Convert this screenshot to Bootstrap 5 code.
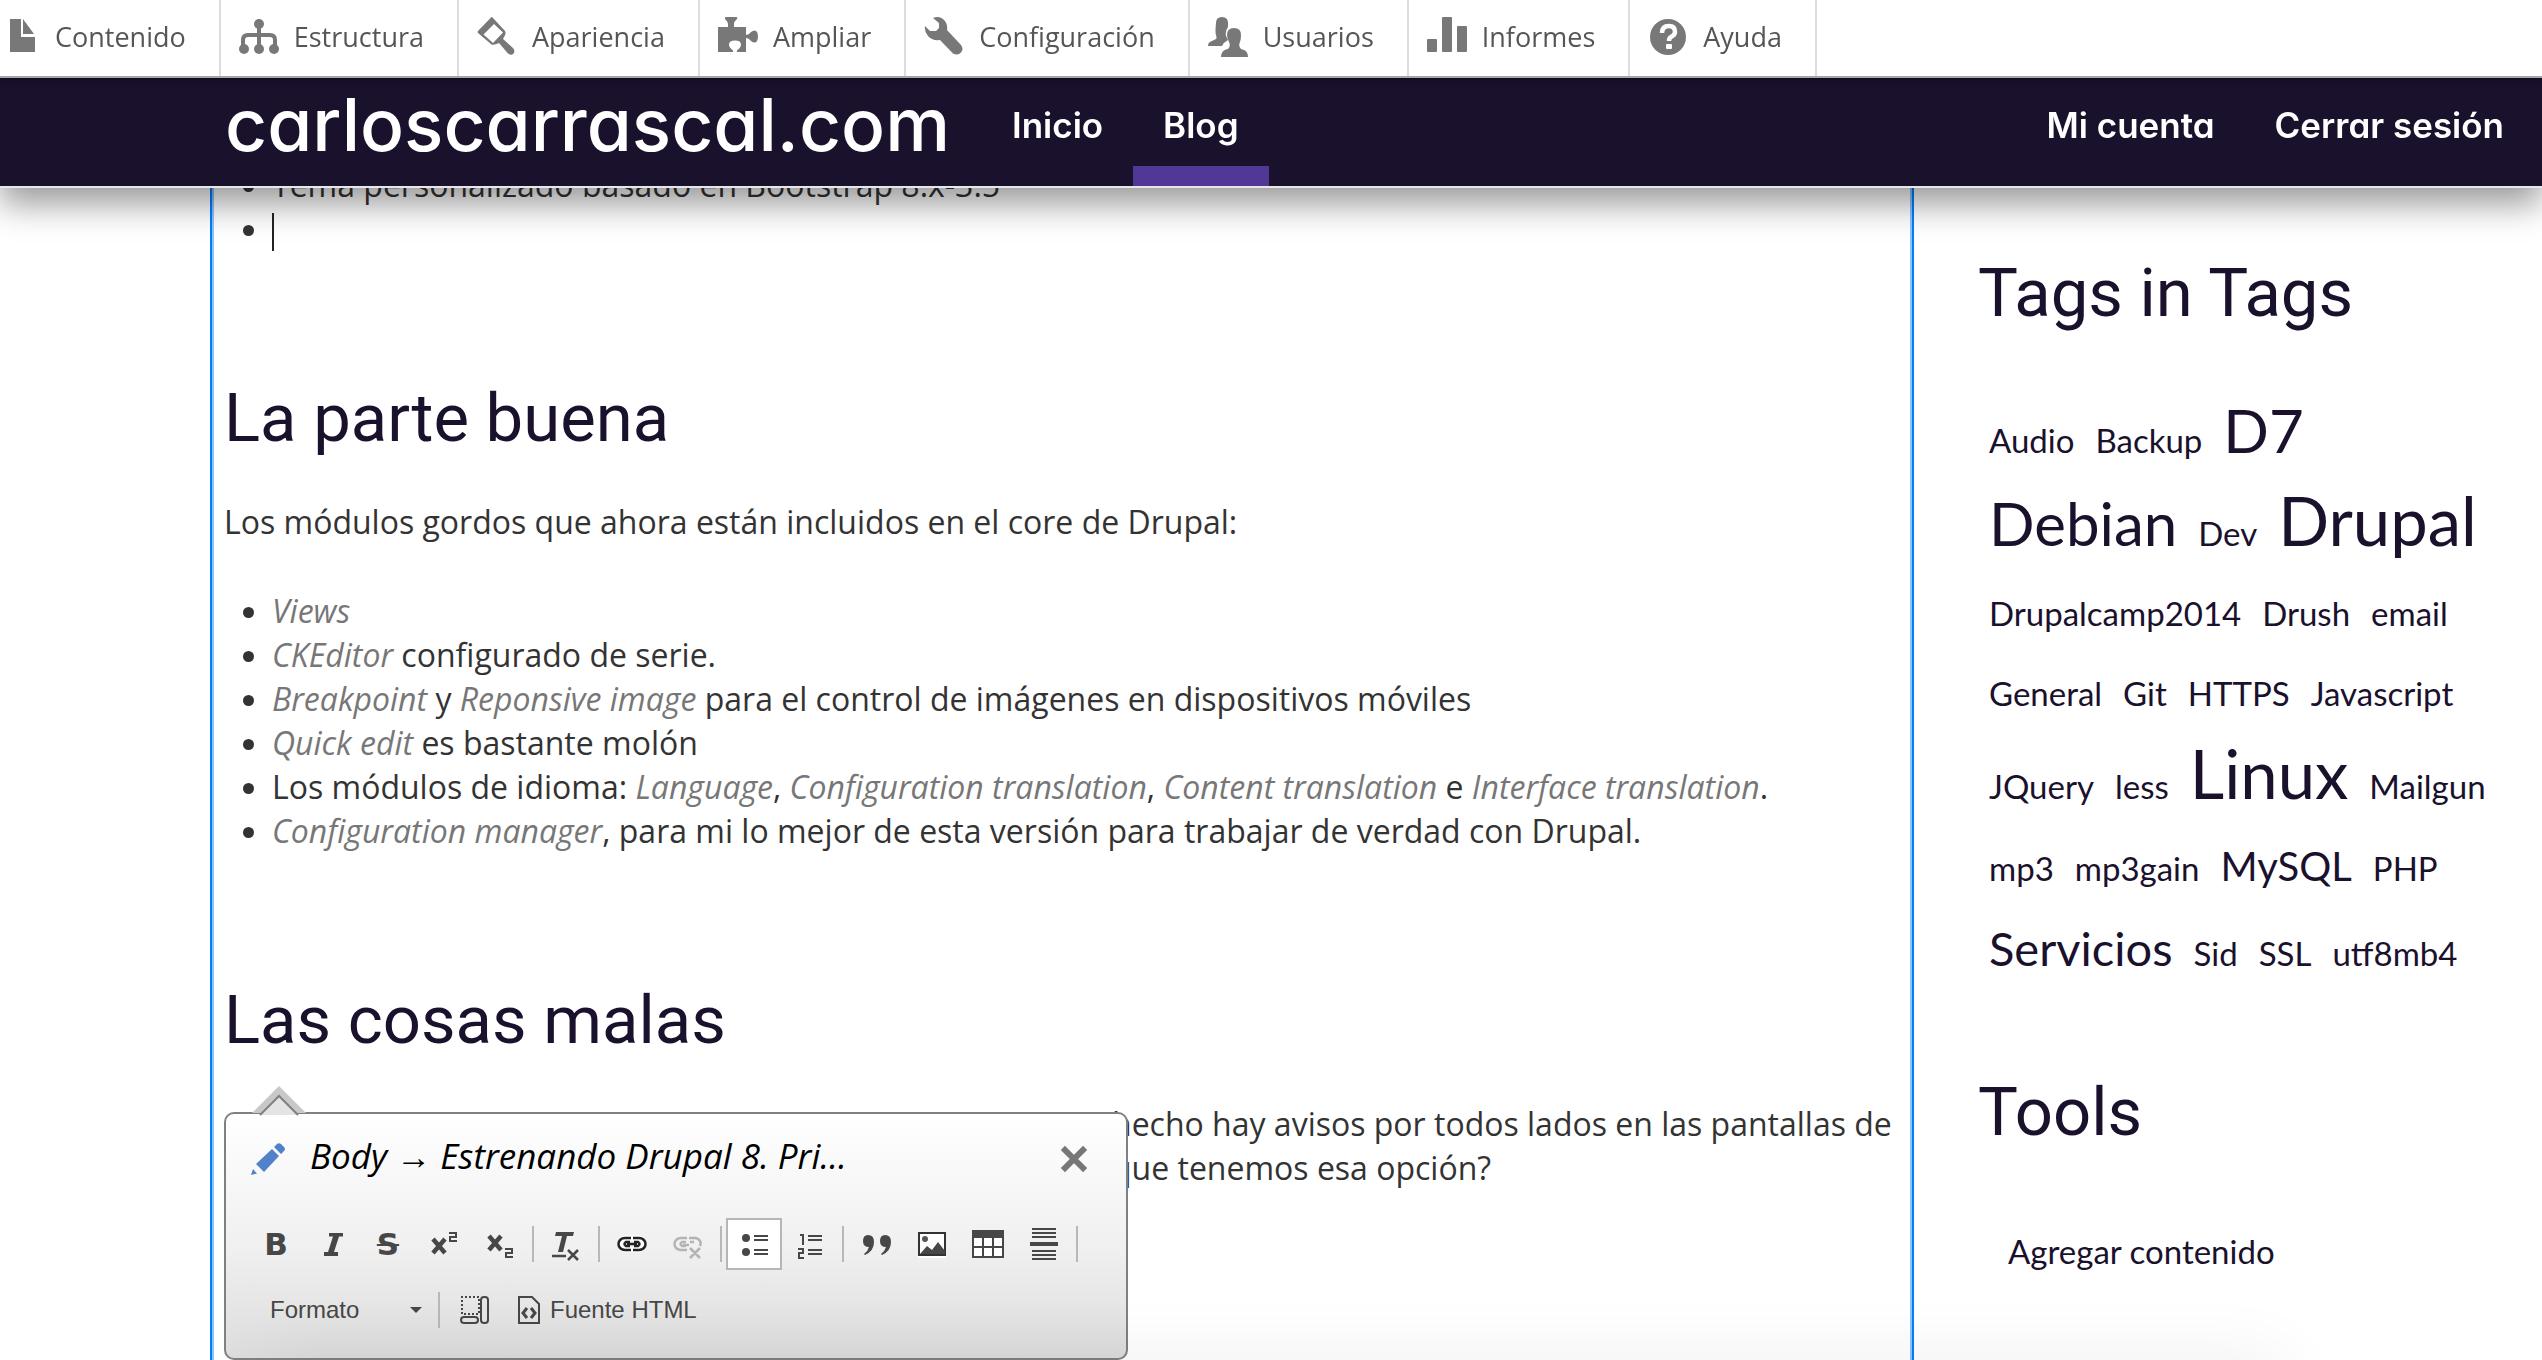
<!DOCTYPE html>
<html lang="es">
<head>
<meta charset="utf-8">
<meta name="viewport" content="width=device-width, initial-scale=1">
<title>Estrenando Drupal 8 | carloscarrascal.com</title>
<link href="https://cdn.jsdelivr.net/npm/bootstrap@5.3.0/dist/css/bootstrap.min.css" rel="stylesheet">
<style>
:root{--ink:#1a112d;--text:#333;--blue:#007fff}
body{font-family:Lato,"Open Sans",sans-serif;font-size:33px;line-height:44px;color:var(--text);background:#fff;height:100vh;overflow:hidden}
a{color:var(--ink);text-decoration:none}
/* admin toolbar */
.admin-bar{background:#fff;border-bottom:2px solid #a6a6a6;height:78px;box-shadow:0 0 8px rgba(0,0,0,.5);position:relative;z-index:2}
.admin-bar a{font-family:"Open Sans",sans-serif;font-size:27px;font-weight:500;color:#565656;gap:15px;padding:0 33px 2px 18px;border-right:2px solid #ddd}
.admin-bar li:first-child a{padding-left:0}
.admin-bar svg{width:40px;height:40px;fill:#787878;flex:none}
/* site header */
.site-nav{background:var(--ink);border-bottom:2px solid #e7e7e7;height:110px;padding-left:210px;padding-right:22px;box-shadow:0 16px 32px rgba(0,0,0,.4)}
.site-nav a{color:#fff;font-family:Inter,sans-serif;font-feature-settings:"cv11";font-weight:600;font-size:35px;border-bottom:20px solid transparent;padding:6px 30px 0}
.site-nav .site-name{font-size:73px;font-weight:500;padding:6px 32px 0 15px}
.site-nav a.active{border-bottom-color:#523896}
/* page */
.page{padding-top:163px;padding-left:210px}
.editable{border:solid var(--blue);border-width:0 2px;box-shadow:inset 2px 0 #8cc3ff,inset -2px 0 #8cc3ff;padding:0 12px}
.editable ul{padding-left:48px;margin-bottom:0}
.editable em{color:#777}
.editable p,.editable ul{font-family:"Open Sans",sans-serif;font-size:32px}
.caret{display:inline-block;width:2px;height:38px;background:#222;vertical-align:middle}
h2{font-family:Roboto,sans-serif;font-weight:400;font-size:67px;line-height:80px;color:var(--ink);margin:127px 0 42px}
p{margin-bottom:45px}
.tail{padding-left:888px}
.side{width:628px;flex:none;padding:11px 0 0 64px}
.side h2{margin:79px 0 57px}
.tagrow{line-height:80px;gap:21px;padding-left:11px}
.t4{font-size:40px}.t6{font-size:47px}.t8{font-size:60px}.t9{font-size:67px}
.tools{padding:20px 0 0 30px}
/* editor dialog */
.dlg{position:absolute;left:224px;top:1112px;width:904px;height:248px;border:2px solid #808080;border-radius:10px;background:linear-gradient(#fff,#f0f0f0 55%,#dcdcdc);z-index:1}
.tip{position:absolute;left:26px;top:-28px}
.dlg-head{padding:20px 38px 0 22px}
.dlg-row1{padding:40px 0 0 22px}
.dlg-row2{padding:22px 0 0 44px}
.dlg-title{font:italic 500 35px/44px "Open Sans",sans-serif;color:#000;padding-left:22px}
.dlg button{border:0;background:none;padding:0;line-height:1}
.tool{width:56px;height:52px}
.dlg svg{overflow:visible}
.tool svg{display:block;margin:auto}
.dlg .tool.on{background:#fff;border:2px solid #b6b6b6}
.sep{width:2px;height:36px;background:#b8b8b8;margin:0 4px}
.cke{color:#474747;font-family:"Liberation Sans",sans-serif;font-size:24px;line-height:32px}
.cke select{appearance:none;border:0;background:none;color:inherit;font:inherit;width:140px;height:36px;padding:0}
.glyph{color:#474747;font:700 31px/32px "DejaVu Sans",sans-serif}
.glyph s{text-decoration-thickness:2px}
.dock{position:absolute;left:280px;right:270px;bottom:0;height:0;box-shadow:0 20px 70px 10px rgba(0,0,0,.16);z-index:3;pointer-events:none}
</style>
</head>
<body>
<header class="fixed-top">
<nav class="admin-bar" aria-label="Administración">
<ul class="list-unstyled d-flex h-100 m-0">
<li><a href="#" class="d-flex align-items-center h-100"><svg viewBox="0 0 40 40"><path d="M10 2h11v18h14v15H10z"/><path d="M23 2l11 15H23z"/></svg>Contenido</a></li>
<li><a href="#" class="d-flex align-items-center h-100"><svg viewBox="0 0 40 40"><path d="M4 30v-7q0-5 5-5h22q5 0 5 5v7M20 7v24" fill="none" stroke="#787878" stroke-width="4"/><circle cx="20" cy="7" r="5"/><circle cx="5" cy="32" r="5"/><circle cx="20" cy="32" r="5"/><circle cx="35" cy="32" r="5"/></svg>Estructura</a></li>
<li><a href="#" class="d-flex align-items-center h-100"><svg viewBox="0 0 40 40"><path fill-rule="evenodd" d="M14.500 0q1 0 2 1.500L28 14q1.500 2-1 6l-1 2 10 9q2.500 3 .5 5.500t-5.500 0L22 26q-5 2.500-7.500 1.500L1 16q-1-1 0-2zM17 7L6.500 17.500 16 26l10-10.500z"/></svg>Apariencia</a></li>
<li><a href="#" class="d-flex align-items-center h-100"><svg viewBox="0 0 40 40"><path d="M7 1q0-1 1-1h10q2 0 1 2-3 2.500-3 5v3h12v8q3 0 5-3 4-3 6 0 2 4 0 9-2 3-6 0-2-3-5-3v14h-8q-1.500 0-1-1.500 4-3 4-6 0-4-6-4t-6 4q0 3 4 6 .5 1.500-1 1.500H0V10h10V7q0-2-3-5z"/></svg>Ampliar</a></li>
<li><a href="#" class="d-flex align-items-center h-100"><svg viewBox="0 0 40 40"><path d="M9 1q7-3 12 3 3 4 2 9l14 15q3 4 0 7.500t-8 1L16 23Q8 24 4 19 0 14 1 9l5 5h6l3-3V6z"/></svg>Configuración</a></li>
<li><a href="#" class="d-flex align-items-center h-100"><svg viewBox="0 0 40 40"><path d="M14 0q6 0 6 6v4q-3 4-2 9l2 4q-4 2-6 6H0q0-4 4-5l4-2q1-1 0-4-1-2 0-12 0-6 6-6z"/><path d="M26 11q7 0 7 7 0 4-1 7-2 4 1 7 7 1 7 8H13q0-7 7-8 3-3 1-7-2-4-2-7 0-7 7-7z"/></svg>Usuarios</a></li>
<li><a href="#" class="d-flex align-items-center h-100"><svg viewBox="0 0 40 40"><rect y="22" width="10" height="13" rx="1"/><rect x="15" width="10" height="35" rx="1"/><rect x="30" y="9" width="10" height="26" rx="1"/></svg>Informes</a></li>
<li><a href="#" class="d-flex align-items-center h-100"><svg viewBox="0 0 40 40"><circle cx="20" cy="20" r="18"/><path d="M14 16q0-7 7-7 6 0 6 6 0 3-4 5-2 1-2 4" fill="none" stroke="#fff" stroke-width="4.500"/><rect x="18" y="27" width="6" height="5" rx="1" fill="#fff"/></svg>Ayuda</a></li>
</ul>
</nav>
<nav class="site-nav d-flex" aria-label="Principal">
<a href="#" class="site-name d-flex align-items-center">carloscarrascal.com</a>
<a href="#" class="d-flex align-items-center">Inicio</a>
<a href="#" class="d-flex align-items-center active">Blog</a>
<a href="#" class="d-flex align-items-center ms-auto">Mi cuenta</a>
<a href="#" class="d-flex align-items-center pe-3">Cerrar sesión</a>
</nav>
</header>

<main class="page d-flex vh-100">
<article class="editable flex-grow-1">
<ul><li>Tema personalizado basado en Bootstrap 8.x-3.5</li><li><span class="caret"></span></li></ul>
<h2>La parte buena</h2>
<p>Los módulos gordos que ahora están incluidos en el core de Drupal:</p>
<ul>
<li><em>Views</em></li>
<li><em>CKEditor</em> configurado de serie.</li>
<li><em>Breakpoint</em> y <em>Reponsive image</em> para el control de imágenes en dispositivos móviles</li>
<li><em>Quick edit</em> es bastante molón</li>
<li>Los módulos de idioma: <em>Language</em>, <em>Configuration translation</em>, <em>Content translation</em> e <em>Interface translation</em>.</li>
<li><em>Configuration manager</em>, para mi lo mejor de esta versión para trabajar de verdad con Drupal.</li>
</ul>
<h2>Las cosas malas</h2>
<p class="tail text-nowrap">hecho hay avisos por todos lados en las pantallas de<br>que tenemos esa opción?</p>
</article>
<aside class="side">
<h2>Tags in Tags</h2>
<div class="tagrow d-flex align-items-baseline"><a href="#">Audio</a><a href="#">Backup</a><a href="#" class="t8">D7</a></div>
<div class="tagrow d-flex align-items-baseline"><a href="#" class="t8">Debian</a><a href="#">Dev</a><a href="#" class="t9">Drupal</a></div>
<div class="tagrow d-flex align-items-baseline"><a href="#">Drupalcamp2014</a><a href="#">Drush</a><a href="#">email</a></div>
<div class="tagrow d-flex align-items-baseline"><a href="#">General</a><a href="#">Git</a><a href="#">HTTPS</a><a href="#">Javascript</a></div>
<div class="tagrow d-flex align-items-baseline"><a href="#">JQuery</a><a href="#">less</a><a href="#" class="t9">Linux</a><a href="#">Mailgun</a></div>
<div class="tagrow d-flex align-items-baseline"><a href="#">mp3</a><a href="#">mp3gain</a><a href="#" class="t4">MySQL</a><a href="#">PHP</a></div>
<div class="tagrow d-flex align-items-baseline"><a href="#" class="t6">Servicios</a><a href="#">Sid</a><a href="#">SSL</a><a href="#">utf8mb4</a></div>
<h2>Tools</h2>
<div class="tools"><a href="#">Agregar contenido</a></div>
</aside>
</main>

<section class="dlg" role="dialog" aria-label="Editor">
<svg class="tip" width="54" height="30" viewBox="0 0 54 30"><path d="M0 27L27 0l27 27z" fill="#c8c8c8"/><path d="M8 29L27 10l19 19" fill="#e4e4e4" stroke="#808080" stroke-width="2"/></svg>
<div class="dlg-head d-flex align-items-center">
<svg width="40" height="40" viewBox="0 0 40 40" fill="#4f82cb"><path d="M24 13l7 7-15 16-8-8zM26 11l3-3q2-1.500 4 0l3 3q2 2 0 4l-3 3zM3 39l2-6 4 4.500z"/></svg>
<span class="dlg-title flex-grow-1">Body → Estrenando Drupal 8. Pri…</span>
<button type="button" aria-label="Cerrar"><svg width="28" height="28" viewBox="0 0 28 28"><path d="M5 5l18 18M23 5L5 23" stroke="#777" stroke-width="6" stroke-linecap="square"/></svg></button>
</div>
<div class="dlg-row1 cke d-flex align-items-center">
<button type="button" class="tool glyph" aria-label="Negrita">B</button>
<button type="button" class="tool" aria-label="Cursiva"><svg width="32" height="32"><path d="M13 5h14v3.500h-4L18 24h4v4H8v-4h4L17 8.500h-4z" fill="#474747"/></svg></button>
<button type="button" class="tool glyph" aria-label="Tachado"><s>S</s></button>
<button type="button" class="tool" aria-label="Superíndice"><svg width="32" height="32" fill="none" stroke="#474747"><path d="M5 11l12 14M17 11L5 25" stroke-width="4.500"/><path d="M21 5h7v4h-6v4h7" stroke-width="2"/></svg></button>
<button type="button" class="tool" aria-label="Subíndice"><svg width="32" height="32" fill="none" stroke="#474747"><path d="M5 8l12 14M17 8L5 22" stroke-width="4.500"/><path d="M21 21h7v4h-6v4h7" stroke-width="2"/></svg></button>
<span class="sep"></span>
<button type="button" class="tool" aria-label="Quitar formato"><svg width="32" height="32"><path d="M6 4h18l-1 4h-6l-4 16H8l4-16H5z" fill="#474747"/><path d="M2 28h14M18 22l10 10M28 22L18 32" stroke="#474747" stroke-width="2.500"/></svg></button>
<span class="sep"></span>
<button type="button" class="tool" aria-label="Enlace"><svg width="32" height="32" fill="none" stroke-width="2.500"><g stroke="#fff" stroke-width="5"><rect x="4" y="10" width="24" height="12" rx="6"/></g><g stroke="#222"><path d="M15 10H9a6 5.500 0 0 0 0 12h6M17 10h6a6 5.500 0 0 1 0 12h-6M14 14h-4q-3 2 0 4h4M18 14h4q3 2 0 4h-4M11 16h10"/></g></svg></button>
<button type="button" class="tool" aria-label="Quitar enlace" disabled><svg width="32" height="32" fill="none" stroke="#b4b4b4" stroke-width="2.500"><path d="M15 10H9a6 5.500 0 0 0 0 12h6M17 10h6a6 5.500 0 0 1 5 8M14 14h-4q-3 2 0 4h4M18 14h4M11 17h6M18 20l10 10M28 20L18 30"/></svg></button>
<span class="sep"></span>
<button type="button" class="tool on" aria-label="Lista con viñetas"><svg width="32" height="32"><g fill="#474747"><circle cx="8" cy="10" r="4"/><circle cx="8" cy="24" r="4"/></g><path d="M16 8h14M16 12h14M16 22h14M16 26h14" stroke="#474747" stroke-width="2"/></svg></button>
<button type="button" class="tool" aria-label="Lista numerada"><svg width="32" height="32"><path d="M14 8h14M14 12h14M14 22h14M14 26h14M6 7h3v10M4 21h5v4H5v5h5" fill="none" stroke="#474747" stroke-width="2"/></svg></button>
<span class="sep"></span>
<button type="button" class="tool" aria-label="Cita"><svg width="32" height="32" fill="#474747"><path id="q" d="M8 7q6 0 6 7 0 9-9 13l-1-1q4-3 5-7-6 0-6-6t5-6z"/><use href="#q" x="17"/></svg></button>
<button type="button" class="tool" aria-label="Imagen"><svg width="32" height="32"><path d="M2 4h28v26H2z" fill="#fff"/><path d="M3 5h26v22H3z" fill="#fff" stroke="#333" stroke-width="2"/><circle cx="9" cy="11" r="3" fill="#555"/><path d="M4 26l7-8 5 4 6-8 7 9v3z" fill="#474747"/></svg></button>
<button type="button" class="tool" aria-label="Tabla"><svg width="32" height="32"><path d="M1 3h30v26H1z" fill="#fff" stroke="#474747" stroke-width="2"/><path d="M0 2h32v8H0z" fill="#474747"/><path d="M1 19h30M11 9v20M21 9v20" stroke="#474747" stroke-width="2"/></svg></button>
<button type="button" class="tool" aria-label="Línea horizontal"><svg width="32" height="32" stroke="#474747" stroke-width="2"><path d="M4 1h24M4 5h24M4 9h24M4 23h24M4 27h24M4 31h24"/><path d="M2 16h28" stroke-width="4"/></svg></button>
<span class="sep"></span>
</div>
<div class="dlg-row2 cke d-flex align-items-center">
<select aria-label="Formato de párrafo"><option>Formato</option></select>
<svg width="12" height="6"><path d="M0 0h12L6 6z" fill="#474747"/></svg>
<span class="sep ms-3"></span>
<button type="button" class="ms-3" aria-label="Mostrar bloques"><svg width="30" height="30" fill="none" stroke="#474747" stroke-width="2"><path d="M1 2h18v17H2V2" stroke-dasharray="2 2"/><rect x="1" y="22" width="17" height="6" rx="3"/><rect x="21" y="2" width="7" height="26" rx="3"/></svg></button>
<button type="button" class="d-flex align-items-center ms-4 cke"><svg class="me-2" width="28" height="30" fill="none" stroke="#474747" stroke-width="2"><path d="M5 2h13l7 7v19H5z"/><path d="M13 13l-4 5 4 5M17 13l4 5-4 5" stroke-width="3"/></svg>Fuente HTML</button>
</div>
</section>
<div class="dock"></div>
<script src="https://cdn.jsdelivr.net/npm/bootstrap@5.3.0/dist/js/bootstrap.bundle.min.js"></script>
</body>
</html>
